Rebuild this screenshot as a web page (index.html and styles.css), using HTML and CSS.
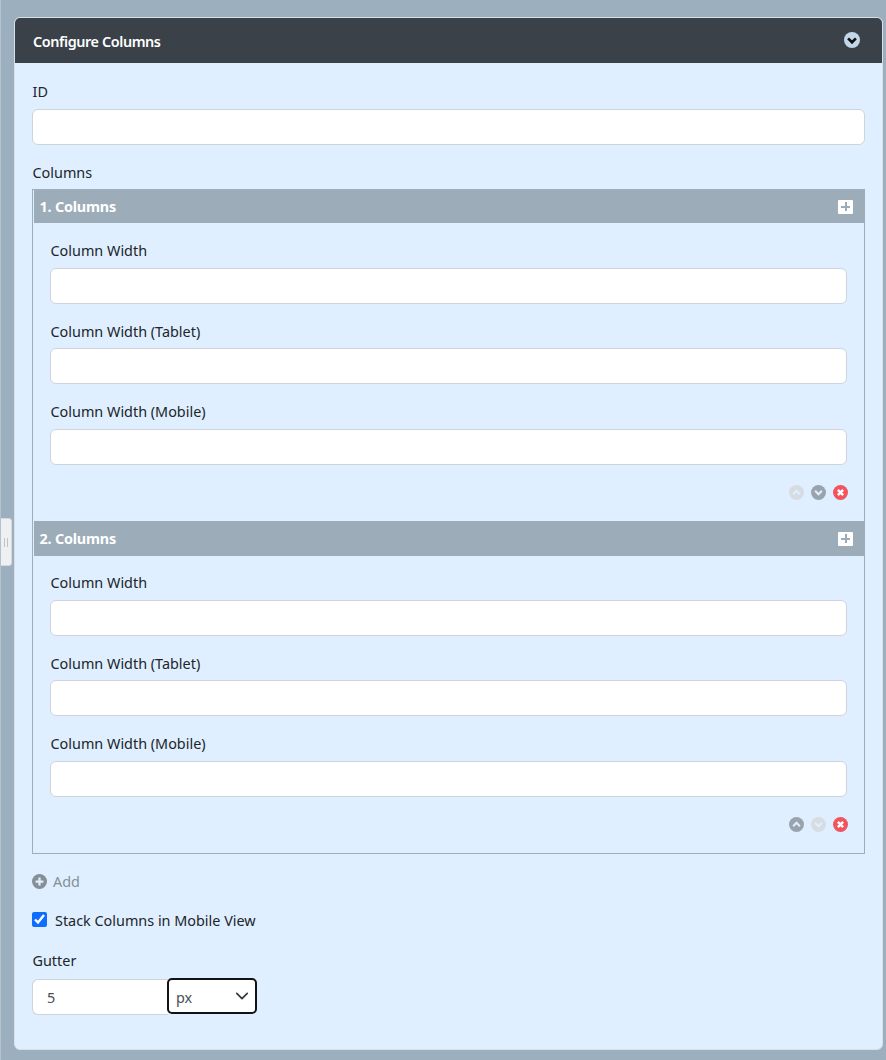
FILE: index.html
```html
<!DOCTYPE html>
<html lang="en">
<head>
<meta charset="utf-8">
<title>Configure Columns</title>
<link rel="stylesheet" href="styles.css">
</head>
<body>
<div class="handle"><span class="grip"></span></div>
<section class="panel">
  <header class="panel-head">
    <h2 class="panel-title">Configure Columns</h2>
    <svg class="head-toggle" viewBox="0 0 18 18"><circle cx="9" cy="9" r="9" fill="#c4d7ea"/><path d="M4.6 7.200 9 11.600l4.400-4.400" fill="none" stroke="#111" stroke-width="3"/></svg>
  </header>
  <div class="panel-body">
    <div class="field">
      <label class="label">ID</label>
      <input class="input" type="text">
    </div>
    <div class="label">Columns</div>
    <div class="group">
      <div class="item">
        <div class="item-head"><span>1. Columns</span><span class="plus"></span></div>
        <div class="item-body">
          <div class="field"><label class="label">Column Width</label><input class="input" type="text"></div>
          <div class="field"><label class="label">Column Width (Tablet)</label><input class="input" type="text"></div>
          <div class="field"><label class="label">Column Width (Mobile)</label><input class="input" type="text"></div>
          <div class="actions">
            <svg class="act off" viewBox="0 0 16 16"><circle cx="8" cy="8" r="8"/><path class="chev" d="M4.400 9.800 8 6.200l3.600 3.600"/></svg>
            <svg class="act" viewBox="0 0 16 16"><circle cx="8" cy="8" r="8"/><path class="chev" d="M4.400 6.200 8 9.800l3.600-3.600"/></svg>
            <svg class="act del" viewBox="0 0 16 16"><circle cx="8" cy="8" r="8"/><path class="chev" d="M5.200 5.200l5.600 5.600M10.800 5.200l-5.600 5.600"/></svg>
          </div>
        </div>
      </div>
      <div class="item">
        <div class="item-head"><span>2. Columns</span><span class="plus"></span></div>
        <div class="item-body">
          <div class="field"><label class="label">Column Width</label><input class="input" type="text"></div>
          <div class="field"><label class="label">Column Width (Tablet)</label><input class="input" type="text"></div>
          <div class="field"><label class="label">Column Width (Mobile)</label><input class="input" type="text"></div>
          <div class="actions">
            <svg class="act" viewBox="0 0 16 16"><circle cx="8" cy="8" r="8"/><path class="chev" d="M4.400 9.800 8 6.200l3.600 3.600"/></svg>
            <svg class="act off" viewBox="0 0 16 16"><circle cx="8" cy="8" r="8"/><path class="chev" d="M4.400 6.200 8 9.800l3.600-3.600"/></svg>
            <svg class="act del" viewBox="0 0 16 16"><circle cx="8" cy="8" r="8"/><path class="chev" d="M5.200 5.200l5.600 5.600M10.800 5.200l-5.600 5.600"/></svg>
          </div>
        </div>
      </div>
    </div>
    <div class="add">
      <svg class="add-icon" viewBox="0 0 16 16"><circle cx="8" cy="8" r="8"/><path class="add-cross" d="M8 3.800v8.400M3.800 8h8.400"/></svg>
      <span>Add</span>
    </div>
    <label class="check">
      <input class="checkbox" type="checkbox" checked>
      <span>Stack Columns in Mobile View</span>
    </label>
    <label class="label">Gutter</label>
    <div class="gutter">
      <input class="input gutter-input" type="text" value="5">
      <div class="gutter-select">
        <span class="select-text">px</span>
        <svg class="select-arrow" viewBox="0 0 16 16"><path d="M2 5l6 6 6-6" fill="none" stroke="#343a40" stroke-width="2" stroke-linecap="round" stroke-linejoin="round"/></svg>
      </div>
    </div>
  </div>
</section>
</body>
</html>
```
FILE: styles.css
```css
* { box-sizing: border-box; }
html, body { margin: 0; height: 100%; }
body {
  background: #9cafbf;
  padding: 17px 3px 10px 14px;
  font-family: "Noto Sans", "Open Sans", sans-serif;
  font-size: 14.4px;
  line-height: 21.6px;
  color: #212529;
  border-left: 1px solid #b3c2d0;
  overflow: hidden;
  position: relative;
}
.handle {
  position: absolute;
  left: -1px;
  top: 518px;
  width: 12px;
  height: 48px;
  background: #eef0f2;
  border: 1px solid #d5d9dd;
  border-radius: 0 3px 3px 0;
  display: flex;
  align-items: center;
  justify-content: center;
}
.grip {
  width: 4px;
  height: 9px;
  border-left: 1px solid #bcc3ca;
  border-right: 1px solid #bcc3ca;
}
.panel {
  margin-left: -1px;
  height: 1033px;
  background: #dfefff;
  border: 1px solid #d9dfe5;
  border-radius: 6px;
  overflow: hidden;
}
.panel-head {
  height: 45px;
  background: #3a4149;
  display: flex;
  align-items: center;
  justify-content: space-between;
  padding: 0 22px 0 18px;
}
.panel-title {
  margin: 0;
  padding-top: 2px;
  font-size: 14.4px;
  font-weight: 600;
  letter-spacing: -0.4px;
  color: #fff;
}
.head-toggle { width: 16px; height: 16px; margin-top: -1px; }
.panel-body { padding: 18px 17px 0 17px; }
.field { margin-bottom: 17px; }
.label { display: block; margin-bottom: 6px; padding-left: 0.5px; }
.input {
  display: block;
  width: 100%;
  height: 36px;
  padding: 7px 14px 5px;
  background: #fff;
  border: 1px solid #ced4da;
  border-radius: 6px;
  font: inherit;
  color: #495057;
  outline: none;
}
.group {
  border: 1px solid #9cadbb;
  height: 665px;
}
.item-head {
  margin-left: 1px;
  height: 33px;
  background: #9dacb9;
  color: #fff;
  font-weight: 700;
  letter-spacing: -0.2px;
  padding: 0 11px 0 5.5px;
  display: flex;
  align-items: center;
  justify-content: space-between;
}
.item + .item .item-head { height: 35px; }
.plus {
  width: 15px;
  height: 14px;
  background: linear-gradient(#9dacb9, #9dacb9) center / 9px 2px no-repeat,
              linear-gradient(#9dacb9, #9dacb9) center / 2px 9px no-repeat,
              #fff;
  border-radius: 1px;
}
.item-body { padding: 17px 17px 0 17px; height: 298px; }
.item + .item .item-body { height: 297px; padding-top: 16px; }
.actions {
  display: flex;
  justify-content: flex-end;
  gap: 7px;
  margin-right: -1px;
  margin-top: 20px;
}
.act { width: 15px; height: 15px; display: block; }
.act circle { fill: #99a3ad; }
.act.off circle { fill: #d6dce2; }
.act.del circle { fill: #f2545f; }
.chev { fill: none; stroke: #dfefff; stroke-width: 2.2; }
.act.del .chev { stroke: #fff; stroke-width: 2.6; }
.add {
  display: flex;
  align-items: center;
  gap: 6px;
  margin-top: 17px;
  color: #868e96;
}
.add-icon { width: 15px; height: 15px; }
.add-icon circle { fill: #868e96; }
.add-cross { stroke: #dfefff; stroke-width: 2.4; fill: none; }
.check {
  display: flex;
  align-items: center;
  gap: 8px;
  margin: 17px 0 19px;
}
.checkbox { width: 15px; height: 15px; margin: 0 0 2px; accent-color: #0d6efd; }
.gutter { display: flex; align-items: flex-start; }
.gutter-input { width: 136px; flex: none; border-radius: 6px 0 0 6px; border-right: 0; margin-top: 1px; }
.gutter-select {
  margin-left: -1px;
  width: 90px;
  height: 36px;
  background: #fff;
  border: 2px solid #101214;
  border-radius: 5px;
  display: flex;
  align-items: center;
  justify-content: space-between;
  padding: 0 6px 0 7px;
  color: #495057;
}
.select-text { padding-top: 3px; }
.select-arrow { width: 14px; height: 14px; }
```
